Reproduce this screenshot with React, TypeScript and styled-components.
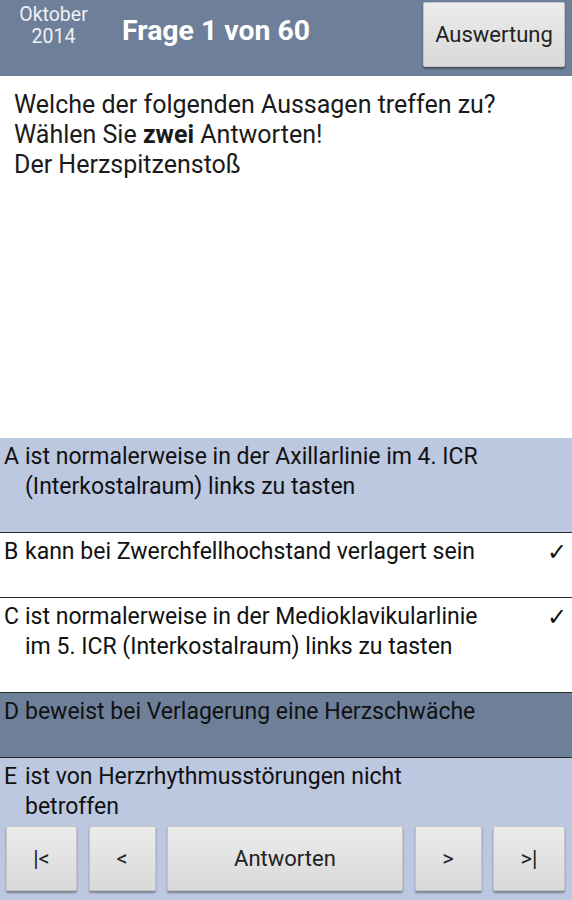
import React from "react";
import styled, { createGlobalStyle } from "styled-components";

const Global = createGlobalStyle`
  html, body { margin: 0; padding: 0; background: #ffffff; }
  body { font-family: Roboto, "Noto Sans", "DejaVu Sans", sans-serif; }
  * { box-sizing: border-box; }
`;

const Page = styled.div`
  width: 572px;
  height: 900px;
  display: flex;
  flex-direction: column;
  overflow: hidden;
  background: #ffffff;
`;

const Header = styled.header`
  height: 76px;
  flex: none;
  background: #6e7f99;
  display: flex;
  align-items: flex-start;
  padding: 0 7px 0 10px;
`;

const DateBlock = styled.div`
  width: 87px;
  margin-top: 4px;
  text-align: center;
  color: #eef1f6;
  font-size: 19.5px;
  line-height: 22px;
`;

const Title = styled.h1`
  margin: 13px 0 0 25px;
  font-size: 28.4px;
  line-height: 36px;
  font-weight: 700;
  color: #ffffff;
`;

const Button = styled.button`
  font-family: Roboto, "Noto Sans", sans-serif;
  font-size: 22px;
  color: #222222;
  background: linear-gradient(#ececec, #d9d9d9);
  border: 1px solid #c4c4c4;
  border-radius: 2px;
  box-shadow: 0 2px 2px rgba(0, 0, 0, 0.35);
  padding: 0;
  display: flex;
  align-items: center;
  justify-content: center;
`;

const HeaderButton = styled(Button)`
  margin-left: auto;
  margin-top: 2px;
  width: 142px;
  height: 65px;
`;

const Question = styled.div`
  flex: 1;
  min-height: 0;
  padding: 14px 14px 0 14px;
  font-size: 25px;
  line-height: 30px;
  color: #1a1a1a;
  & b { font-weight: 700; }
`;

const Row = styled.div<{ $bg: string; $last?: boolean }>`
  flex: none;
  display: flex;
  align-items: flex-start;
  background: ${(p) => p.$bg};
  padding: 4px 5px ${(p) => (p.$last ? "0" : "30px")} 4px;
  border-bottom: ${(p) => (p.$last ? "none" : "1px solid #2a2a2a")};
  font-size: 23px;
  line-height: 30px;
  color: #111111;
`;

const Letter = styled.span`
  width: 21px;
  flex: none;
`;

const AnswerText = styled.span`
  flex: 1;
`;

const Check = styled.span`
  flex: none;
  width: 80px;
  text-align: right;
  font-family: "DejaVu Sans", sans-serif;
  font-size: 24px;
  line-height: 30px;
  color: #111;
`;

const Footer = styled.div`
  flex: none;
  background: #bcc7e0;
  padding: 4px 7px 9px 6px;
  display: grid;
  grid-template-columns: 71px 67px 1fr 67px 72px;
  column-gap: 11.5px;
`;

const NavButton = styled(Button)`
  height: 65px;
`;

const light = "#bcc7e0";
const dark = "#6e7f99";

const answers = [
  { l: "A", t: "ist normalerweise in der Axillarlinie im 4. ICR (Interkostalraum) links zu tasten", bg: light, c: false },
  { l: "B", t: "kann bei Zwerchfellhochstand verlagert sein", bg: "#ffffff", c: true },
  { l: "C", t: "ist normalerweise in der Medioklavikularlinie im 5. ICR (Interkostalraum) links zu tasten", bg: "#ffffff", c: true },
  { l: "D", t: "beweist bei Verlagerung eine Herzschwäche", bg: dark, c: false },
  { l: "E", t: "ist von Herzrhythmusstörungen nicht betroffen", bg: light, c: false },
];

export default function App() {
  return (
    <Page>
      <Global />
      <Header>
        <DateBlock>
          Oktober
          <br />
          2014
        </DateBlock>
        <Title>Frage 1 von 60</Title>
        <HeaderButton>Auswertung</HeaderButton>
      </Header>
      <Question>
        Welche der folgenden Aussagen treffen zu?
        <br />
        Wählen Sie <b>zwei</b> Antworten!
        <br />
        Der Herzspitzenstoß
      </Question>
      {answers.map((a, i) => (
        <Row key={a.l} $bg={a.bg} $last={i === answers.length - 1}>
          <Letter>{a.l}</Letter>
          <AnswerText>{a.t}</AnswerText>
          <Check>{a.c ? "✓" : ""}</Check>
        </Row>
      ))}
      <Footer>
        <NavButton>|&lt;</NavButton>
        <NavButton>&lt;</NavButton>
        <NavButton>Antworten</NavButton>
        <NavButton>&gt;</NavButton>
        <NavButton>&gt;|</NavButton>
      </Footer>
    </Page>
  );
}
